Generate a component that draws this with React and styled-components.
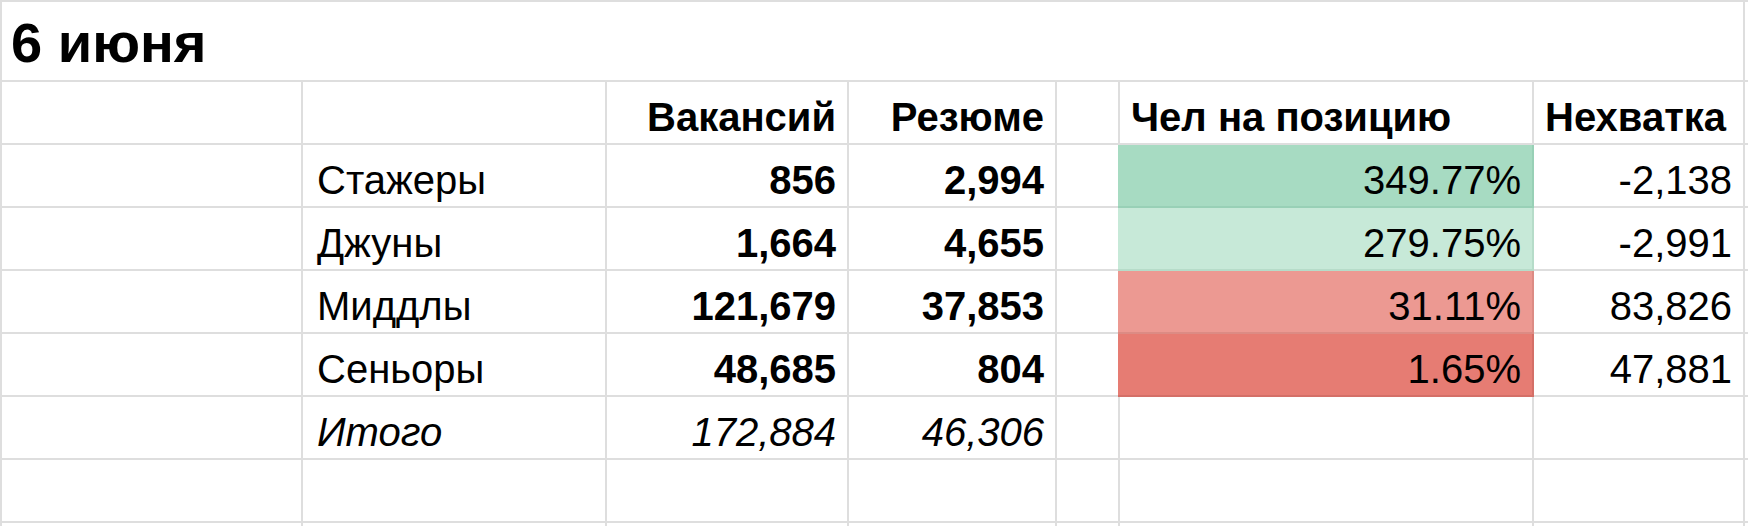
import React from 'react';
import styled, { createGlobalStyle } from 'styled-components';

const GRID = '#dedede';

const GlobalStyle = createGlobalStyle`
  html, body {
    margin: 0;
    padding: 0;
    background: #fff;
    overflow: hidden;
  }
  body {
    font-family: 'Liberation Sans', Arial, sans-serif;
    color: #000;
  }
`;

const tones = {
  green: { bg: '#a7dbc2', line: '#98d0b6' },
  mint: { bg: '#c7e9d8', line: '#b6dcc9' },
  salmon: { bg: '#ec9992', line: '#dc8b84' },
  red: { bg: '#e67c73', line: '#d46f67' },
};

const rows = [
  { label: 'Стажеры', vac: '856', res: '2,994', ratio: '349.77%', gap: '-2,138', tone: 'green' },
  { label: 'Джуны', vac: '1,664', res: '4,655', ratio: '279.75%', gap: '-2,991', tone: 'mint' },
  { label: 'Миддлы', vac: '121,679', res: '37,853', ratio: '31.11%', gap: '83,826', tone: 'salmon' },
  { label: 'Сеньоры', vac: '48,685', res: '804', ratio: '1.65%', gap: '47,881', tone: 'red' },
];

export default function App() {
  return (
    <>
      <GlobalStyle />
      <Sheet>
        <Title>6 июня</Title>
        <Cell />

        <Cell />
        <Cell />
        <Cell $align="right" $bold>Вакансий</Cell>
        <Cell $align="right" $bold>Резюме</Cell>
        <Cell />
        <Cell $bold>Чел на позицию</Cell>
        <Cell $bold>Нехватка</Cell>
        <Cell />

        {rows.map(r => (
          <React.Fragment key={r.label}>
            <Cell />
            <Cell $pad="14px">{r.label}</Cell>
            <Cell $align="right" $bold>{r.vac}</Cell>
            <Cell $align="right" $bold>{r.res}</Cell>
            <Cell />
            <Cell $align="right" $tone={tones[r.tone]}>{r.ratio}</Cell>
            <Cell $align="right">{r.gap}</Cell>
            <Cell />
          </React.Fragment>
        ))}

        <Cell />
        <Cell $pad="14px" $italic>Итого</Cell>
        <Cell $align="right" $italic>172,884</Cell>
        <Cell $align="right" $italic>46,306</Cell>
        <Cell />
        <Cell />
        <Cell />
        <Cell />

        {Array.from({ length: 16 }).map((_, i) => (
          <Cell key={i} />
        ))}
      </Sheet>
    </>
  );
}

const Sheet = styled.div`
  width: 1748px;
  height: 526px;
  box-sizing: border-box;
  display: grid;
  grid-template-columns: 301px 304px 242px 208px 63px 414px 211px 1fr;
  grid-template-rows: 80px repeat(8, 63px);
  border-top: 2px solid ${GRID};
  border-left: 2px solid ${GRID};
  overflow: hidden;
`;

const Cell = styled.div`
  box-sizing: border-box;
  display: flex;
  align-items: flex-end;
  justify-content: ${p => (p.$align === 'right' ? 'flex-end' : 'flex-start')};
  padding: 0 11px 6px ${p => p.$pad || '11px'};
  font-size: 40px;
  line-height: 1;
  font-weight: ${p => (p.$bold ? 700 : 400)};
  font-style: ${p => (p.$italic ? 'italic' : 'normal')};
  white-space: nowrap;
  color: #000;
  background: ${p => (p.$tone ? p.$tone.bg : '#fff')};
  border-right: 2px solid ${p => (p.$tone ? p.$tone.line : GRID)};
  border-bottom: 2px solid ${p => (p.$tone ? p.$tone.line : GRID)};
  margin-left: ${p => (p.$tone ? '-2px' : '0')};
`;

const Title = styled.div`
  grid-column: 1 / 8;
  box-sizing: border-box;
  display: flex;
  align-items: flex-end;
  padding: 0 0 9px 9px;
  font-size: 56px;
  line-height: 1;
  font-weight: 700;
  color: #000;
  border-right: 2px solid ${GRID};
  border-bottom: 2px solid ${GRID};
`;
